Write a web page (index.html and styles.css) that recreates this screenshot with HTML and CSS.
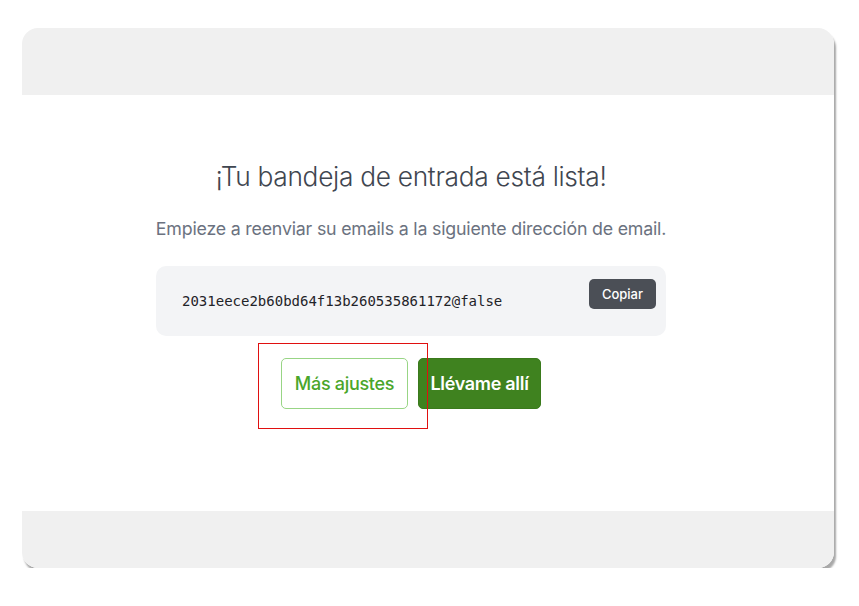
FILE: index.html
```html
<!DOCTYPE html>
<html lang="es">
<head>
    <meta charset="UTF-8">
    <meta name="viewport" content="width=device-width, initial-scale=1.0">
    <title>Bandeja lista</title>
    <link rel="stylesheet" href="styles.css">
</head>
<body>
    <div class="card">
      <div class="card-header"></div>

      <div class="card-body">
        <h1 class="title">¡Tu bandeja de entrada está lista!</h1>
        <p class="subtitle">Empieze a reenviar su emails a la siguiente dirección de email.</p>

        <div class="address-box">
          <span class="address">2031eece2b60bd64f13b260535861172@false</span>
          <button class="copy-button">Copiar</button>
        </div>

        <div class="actions">
          <button class="btn btn-outline">Más ajustes</button>
          <button class="btn btn-primary">Llévame allí</button>
          <div class="highlight"></div>
        </div>
      </div>

      <div class="card-footer"></div>
    </div>
</body>
</html>
```

FILE: styles.css
```css
body {
  margin: 0;
  background: #fff;
  font-family: "Inter", "Liberation Sans", sans-serif;
}
.card {
  width: 812px;
  height: 540px;
  margin: 28px 0 0 22px;
  border-radius: 16px;
  background: #fff;
  box-shadow: 2px 4px 2px #a8a8a8;
  overflow: hidden;
  display: flex;
  flex-direction: column;
}
.card-header {
  height: 67px;
  background: #f0f0f0;
}
.card-footer {
  height: 57px;
  background: #f0f0f0;
}
.card-body {
  flex: 1;
  display: flex;
  flex-direction: column;
  align-items: center;
  padding: 0 34px 0 0;
}
.title {
  margin: 66px 0 0;
  font-size: 26.3px;
  font-weight: 300;
  color: #3f4650;
  letter-spacing: -0.3px;
}
.subtitle {
  margin: 26px 0 0;
  font-size: 17.8px;
  font-weight: 400;
  color: #6b7280;
  letter-spacing: -0.2px;
}
.address-box {
  width: 510px;
  height: 70px;
  margin-top: 27px;
  box-sizing: border-box;
  background: #f3f4f6;
  border-radius: 10px;
  display: flex;
  align-items: flex-start;
  justify-content: space-between;
  padding: 13px 10px 0 26px;
}
.address {
  margin-top: 14px;
  font-family: "DejaVu Sans Mono", "Liberation Mono", monospace;
  font-size: 14px;
  color: #1f2328;
}
.copy-button {
  height: 30px;
  padding: 0 13px;
  border: none;
  border-radius: 5px;
  background: #4b4f56;
  color: #fff;
  font-family: inherit;
  font-size: 13px;
  font-weight: 500;
  cursor: pointer;
}
.actions {
  position: relative;
  display: flex;
  gap: 10px;
  margin-top: 22px;
}
.btn {
  height: 51px;
  padding: 0;
  border-radius: 5px;
  font-family: inherit;
  font-size: 18px;
  font-weight: 500;
  cursor: pointer;
  letter-spacing: -0.3px;
}
.btn-outline {
  width: 127px;
  background: #fff;
  border: 1px solid #98d585;
  color: #4aa62a;
}
.btn-primary {
  width: 123px;
  background: #3f821f;
  border: 1px solid #3a7a1c;
  color: #fff;
  font-weight: 600;
}
.highlight {
  position: absolute;
  left: -23px;
  top: -15px;
  width: 168px;
  height: 84px;
  border: 1px solid #e01010;
  pointer-events: none;
}
```
